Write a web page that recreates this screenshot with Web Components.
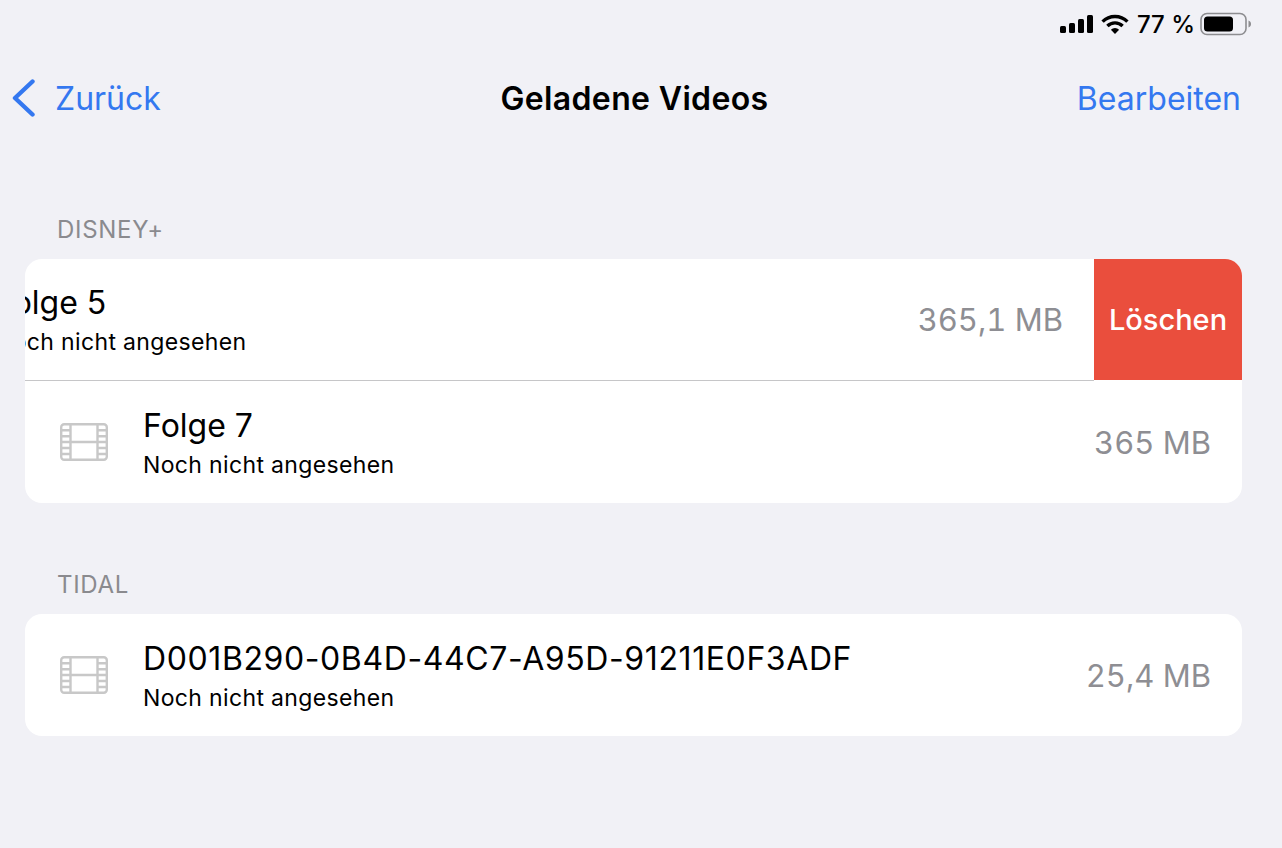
<!DOCTYPE html>
<html lang="de">
<head>
<meta charset="utf-8">
<title>Geladene Videos</title>
<style>
  html, body { margin: 0; height: 100%; }
  body { background: #f1f1f6; font-family: Inter, "Liberation Sans", sans-serif; color: #000; overflow: hidden; }
</style>
</head>
<body>
<status-bar></status-bar>
<nav-bar back="Zurück" title="Geladene Videos" action="Bearbeiten"></nav-bar>
<video-section label="DISNEY+" style="--label-top:69px">
  <video-row name="Folge 5" sub="Noch nicht angesehen" size="365,1 MB" swiped></video-row>
  <video-row name="Folge 7" sub="Noch nicht angesehen" size="365 MB"></video-row>
</video-section>
<video-section label="TIDAL" style="--label-top:69px">
  <video-row name="D001B290-0B4D-44C7-A95D-91211E0F3ADF" sub="Noch nicht angesehen" size="25,4 MB" wide></video-row>
</video-section>

<script>
'use strict';

const statusTemplate = document.createElement('template');
statusTemplate.innerHTML = `
<style>
  :host { display: flex; justify-content: flex-end; align-items: center; height: 48px; padding-right: 30px; gap: 7px; box-sizing: border-box; }
  .pct { font-size: 24px; font-weight: 500; margin: 0 -2px 0 1px; }
  svg { display: block; }
</style>
<svg width="34" height="20" viewBox="0 0 34 20">
  <rect x="0" y="12" width="6" height="7" rx="1.5"/>
  <rect x="9" y="9" width="6" height="10" rx="1.5"/>
  <rect x="18" y="5" width="6" height="14" rx="1.5"/>
  <rect x="27" y="1" width="6" height="18" rx="1.5"/>
</svg>
<svg width="28" height="21" viewBox="0 0 28 21" fill="none" stroke="#000" stroke-width="3.4">
  <path d="M1.6 7.6 A17.5 17.5 0 0 1 26.4 7.6"/>
  <path d="M6.4 12 A10.8 10.8 0 0 1 21.6 12"/>
  <path d="M14 20 L9.9 15.8 A5.8 5.8 0 0 1 18.1 15.8 Z" fill="#000" stroke="none"/>
</svg>
<span class="pct">77 %</span>
<svg width="52" height="24" viewBox="0 0 52 24">
  <rect x="1" y="1.5" width="45" height="21" rx="6" fill="none" stroke="#8d8d90" stroke-width="1.6"/>
  <rect x="4" y="4.5" width="29" height="15" rx="3.5"/>
  <path d="M48.5 8.5 C50.5 9.5 51 10.5 51 12 C51 13.5 50.5 14.5 48.5 15.5 Z" fill="#8d8d90"/>
</svg>`;

customElements.define('status-bar', class StatusBar extends HTMLElement {
  constructor() {
    super();
    this.attachShadow({ mode: 'open' }).appendChild(statusTemplate.content.cloneNode(true));
  }
});

const navTemplate = document.createElement('template');
navTemplate.innerHTML = `
<style>
  :host { display: grid; grid-template-columns: 1fr auto 1fr; align-items: center; height: 100px; padding: 0 25px 0 12px; font-size: 32px; color: #3478f0; }
  .back { display: flex; align-items: center; gap: 19px; }
  .title { color: #000; font-weight: 600; letter-spacing: .35px; }
  .action { justify-self: end; margin-right: 16px; }
  svg { display: block; }
</style>
<div class="back">
  <svg width="24" height="38" viewBox="0 0 24 38" fill="none" stroke="#3478f0" stroke-width="4.4" stroke-linecap="round" stroke-linejoin="round">
    <path d="M20.5 2.5 L3 19 L20.5 35.5"/>
  </svg>
  <span id="back"></span>
</div>
<span class="title" id="title"></span>
<span class="action" id="action"></span>`;

customElements.define('nav-bar', class NavBar extends HTMLElement {
  constructor() {
    super();
    this._root = this.attachShadow({ mode: 'open' });
    this._root.appendChild(navTemplate.content.cloneNode(true));
  }
  connectedCallback() {
    for (const name of ['back', 'title', 'action']) {
      this._root.querySelector('#' + name).textContent = this.getAttribute(name);
    }
  }
});

const sectionTemplate = document.createElement('template');
sectionTemplate.innerHTML = `
<style>
  :host { display: block; padding: var(--label-top) 40px 0 25px; }
  .label { font-size: 24px; line-height: 26px; letter-spacing: .7px; color: #8a8a8e; padding: 0 0 16px 32px; }
  .card { background: #fff; border-radius: 17px; overflow: hidden; }
</style>
<div class="label" id="label"></div>
<div class="card"><slot></slot></div>`;

customElements.define('video-section', class VideoSection extends HTMLElement {
  constructor() {
    super();
    this._root = this.attachShadow({ mode: 'open' });
    this._root.appendChild(sectionTemplate.content.cloneNode(true));
  }
  connectedCallback() {
    this._root.querySelector('#label').textContent = this.getAttribute('label');
  }
});

const rowTemplate = document.createElement('template');
rowTemplate.innerHTML = `
<style>
  :host { display: flex; height: 122px; overflow: hidden; }
  .content { flex: 0 0 100%; box-sizing: border-box; display: flex; align-items: center; padding: 0 31px 0 35px; gap: 35px; }
  :host([swiped]) .content { margin-left: -148px; height: 122px; border-bottom: 1px solid #c6c6c8; }
  .text { flex: 1; min-width: 0; display: flex; flex-direction: column; gap: 4px; padding-top: 1px; }
  .name { font-size: 32px; line-height: 40px; white-space: nowrap; }
  :host([wide]) .name { letter-spacing: .6px; }
  .sub { font-size: 23px; line-height: 30px; letter-spacing: .35px; white-space: nowrap; }
  .size { font-size: 31px; color: #8e8e93; white-space: nowrap; font-feature-settings: "tnum"; }
  .delete { flex: 0 0 148px; height: 121px; display: none; align-items: center; justify-content: center; background: #ea4e3d; color: #fff; font-size: 29px; font-weight: 500; }
  :host([swiped]) .delete { display: flex; }
  svg { display: block; flex: none; }
</style>
<div class="content">
  <svg width="48" height="38" viewBox="0 0 48 38" fill="none" stroke="#c8c8c8" stroke-width="2.4">
    <rect x="1.2" y="1.2" width="45.6" height="35.6" rx="3"/>
    <path d="M10.5 1.2 V36.8 M37.5 1.2 V36.8 M10.5 19 H37.5"/>
    <path d="M1.2 7.2 H10.5 M1.2 13.2 H10.5 M1.2 19 H10.5 M1.2 25 H10.5 M1.2 31 H10.5 M37.5 7.2 H46.8 M37.5 13.2 H46.8 M37.5 19 H46.8 M37.5 25 H46.8 M37.5 31 H46.8"/>
  </svg>
  <div class="text">
    <span class="name" id="name"></span>
    <span class="sub" id="sub"></span>
  </div>
  <span class="size" id="size"></span>
</div>
<div class="delete">Löschen</div>`;

customElements.define('video-row', class VideoRow extends HTMLElement {
  constructor() {
    super();
    this._root = this.attachShadow({ mode: 'open' });
    this._root.appendChild(rowTemplate.content.cloneNode(true));
  }
  connectedCallback() {
    for (const name of ['name', 'sub', 'size']) {
      this._root.querySelector('#' + name).textContent = this.getAttribute(name);
    }
  }
});
</script>
</body>
</html>
